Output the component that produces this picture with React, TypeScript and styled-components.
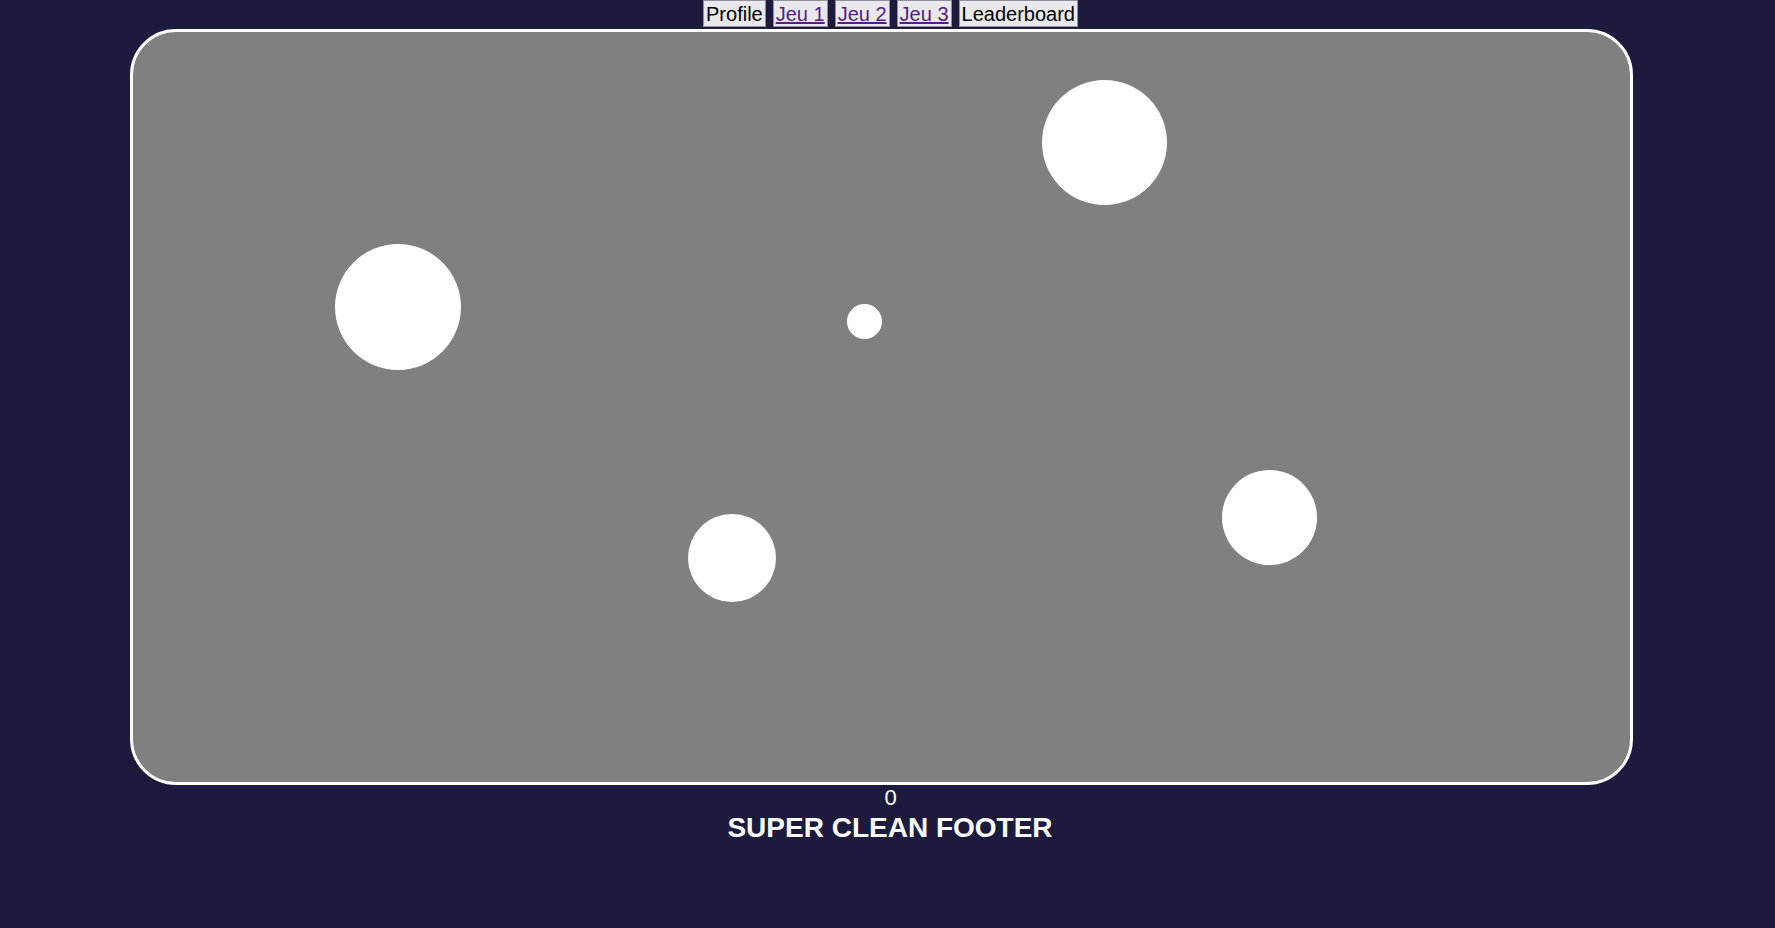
import React from "react";
import styled, { createGlobalStyle } from "styled-components";

const GlobalStyle = createGlobalStyle`
  html, body {
    margin: 0;
    padding: 0;
    background: #1c1b3e;
    font-family: "Liberation Sans", Arial, sans-serif;
  }
`;

type Bubble = { x: number; y: number; size: number };

// positions inside the board (padding box)
const bubbles: Bubble[] = [
  { x: 909, y: 48, size: 125 },
  { x: 202, y: 212, size: 126 },
  { x: 714, y: 272, size: 35 },
  { x: 555, y: 482, size: 88 },
  { x: 1089, y: 438, size: 95 },
];

export default function App() {
  return (
    <Page>
      <GlobalStyle />
      <Nav>
        <NavButton>Profile</NavButton>
        <NavButton>
          <NavLink href="#jeu1">Jeu 1</NavLink>
        </NavButton>
        <NavButton>
          <NavLink href="#jeu2">Jeu 2</NavLink>
        </NavButton>
        <NavButton>
          <NavLink href="#jeu3">Jeu 3</NavLink>
        </NavButton>
        <NavButton>Leaderboard</NavButton>
      </Nav>
      <Board>
        {bubbles.map((b, i) => (
          <Dot
            key={i}
            style={{ left: b.x, top: b.y, width: b.size, height: b.size }}
          />
        ))}
      </Board>
      <Score>0</Score>
      <Footer>SUPER CLEAN FOOTER</Footer>
    </Page>
  );
}

const Page = styled.div`
  min-height: 100vh;
  display: flex;
  flex-direction: column;
  background: #1c1b3e;
`;

const Nav = styled.nav`
  display: flex;
  justify-content: center;
  align-items: flex-start;
  gap: 7px;
  padding-left: 6px;
  height: 29px;
`;

const NavButton = styled.button`
  font-family: "Liberation Sans", Arial, sans-serif;
  font-size: 20px;
  color: #000;
  background: #e9e9ed;
  border: 1px solid #8f8f9d;
  border-radius: 0;
  padding: 1px 2px 0;
  height: 27px;
  line-height: 23px;
  cursor: pointer;
`;

const NavLink = styled.a`
  color: #551a8b;
  text-decoration: underline;
`;

const Board = styled.div`
  position: relative;
  box-sizing: border-box;
  width: 1503px;
  height: 756px;
  margin-left: 130px;
  border: 3px solid #fff;
  border-radius: 46px;
  background: #808080;
  overflow: hidden;
`;

const Dot = styled.div`
  position: absolute;
  border-radius: 50%;
  background: #fff;
`;

const Score = styled.div`
  text-align: center;
  padding-left: 6px;
  color: #fff;
  font-size: 22px;
  line-height: 24px;
  margin-top: 1px;
`;

const Footer = styled.div`
  text-align: center;
  padding-left: 5px;
  color: #fff;
  font-size: 28px;
  font-weight: bold;
  line-height: 32px;
  margin-top: 2px;
`;
